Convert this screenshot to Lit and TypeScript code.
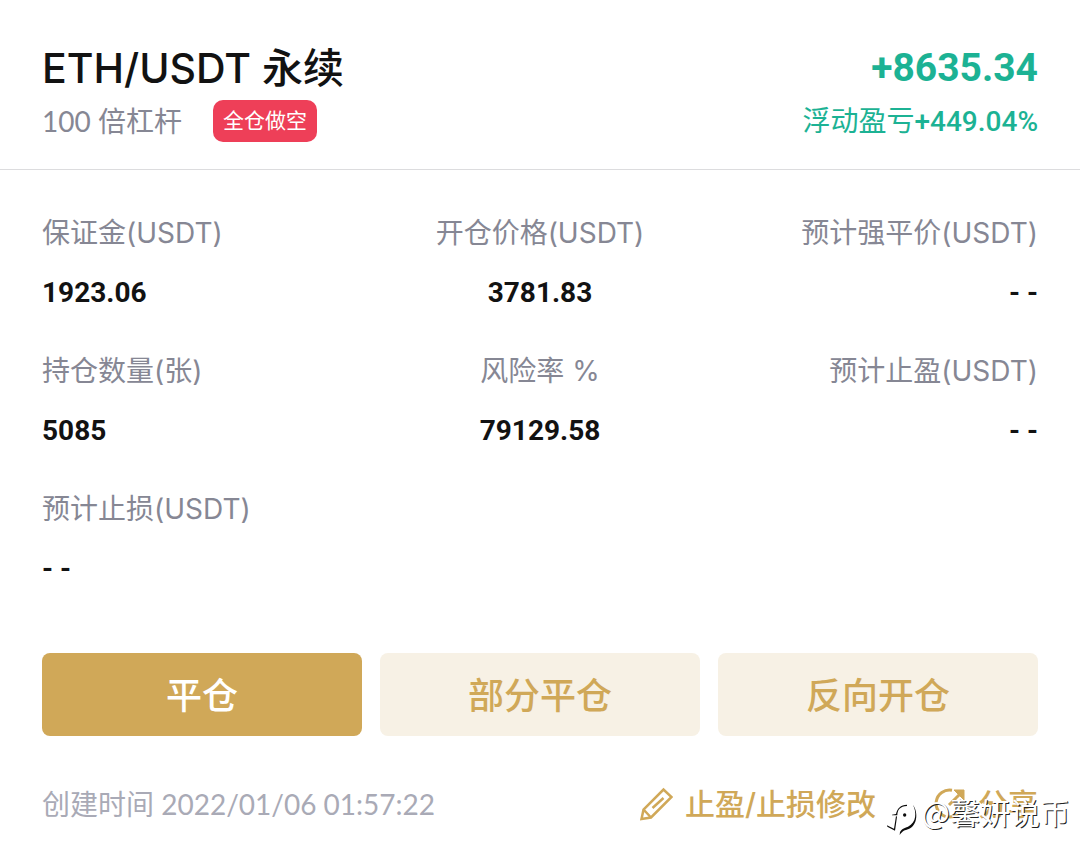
import { LitElement, html, css, svg } from "lit";
import { customElement } from "lit/decorators.js";

interface Field {
  label: string;
  value: string;
}

const FIELDS: Field[] = [
  { label: "保证金(USDT)", value: "1923.06" },
  { label: "开仓价格(USDT)", value: "3781.83" },
  { label: "预计强平价(USDT)", value: "- -" },
  { label: "持仓数量(张)", value: "5085" },
  { label: "风险率 %", value: "79129.58" },
  { label: "预计止盈(USDT)", value: "- -" },
  { label: "预计止损(USDT)", value: "- -" },
];

const pencil = svg`<path d="M2.500 32 L4.500 22.500 L24.500 2.500 L32.500 10 L12 30.500 Z M4.500 22.500 L12 30.500 M13.500 21 L24.500 11" />`;
const share = svg`<path d="M20 3.200 A13.500 13.500 0 1 0 31 18 M17 18 L29 6" stroke-width="3" /><path d="M22 3 H32 V13 Z" fill="currentColor" stroke-width="1" />`;

@customElement("app-root")
export class AppRoot extends LitElement {
  static styles = css`
    :host {
      display: block;
      position: relative;
      min-height: 100vh;
      background: #fff;
      color: #121212;
      font-family: Inter, "Noto Sans CJK SC", sans-serif;
      font-size: 28px;
      line-height: 40px;
    }
    * { box-sizing: border-box; }
    .header {
      display: flex;
      justify-content: space-between;
      padding: 40px 42px 27px;
      border-bottom: 1px solid #dcdcde;
    }
    h1 {
      margin: 0;
      font-size: 41px;
      line-height: 56px;
      font-weight: 500;
    }
    .sub { display: flex; align-items: center; gap: 31px; margin-top: 4px; color: #868794; }
    .plain { font-family: Lato, "Noto Sans CJK SC", sans-serif; }
    .tag {
      padding: 0 10px;
      border-radius: 10px;
      background: #ee3f58;
      color: #fff;
      font-size: 21px;
      line-height: 42px;
    }
    .profit { text-align: right; color: #1cb294; }
    .amount { font: 700 39px/56px Roboto, sans-serif; }
    .rate { margin-top: 6px; font-family: Roboto, "Noto Sans CJK SC", sans-serif; }
    .rate span { font-weight: 500; }
    .fields {
      display: grid;
      grid-template-columns: repeat(3, 1fr);
      row-gap: 38px;
      margin: 0;
      padding: 43px 42px 0;
    }
    .field:nth-child(3n + 2) { text-align: center; }
    .field:nth-child(3n) { text-align: right; }
    dt { color: #868794; white-space: nowrap; }
    dd { margin: 20px 0 0; font-family: Roboto, sans-serif; font-weight: 700; }
    .actions {
      display: grid;
      grid-template-columns: repeat(3, 1fr);
      gap: 18px;
      padding: 64px 42px 0;
    }
    button { border: 0; font-family: inherit; font-weight: 500; color: #d0a858; cursor: pointer; }
    .action {
      height: 83px;
      padding: 0 0 4px;
      border-radius: 8px;
      background: #f7f1e5;
      font-size: 36px;
    }
    .primary { background: #d0a858; color: #fff; }
    .footer {
      display: flex;
      align-items: center;
      justify-content: space-between;
      padding: 48px 42px 40px;
      color: #a9aab6;
    }
    .links { display: flex; gap: 56px; }
    .link {
      display: flex;
      align-items: center;
      gap: 12px;
      padding: 0;
      background: none;
      font-size: 30px;
      line-height: 40px;
    }
    svg { width: 34px; height: 34px; fill: none; stroke: currentColor; stroke-width: 2.5; }
    .watermark {
      position: absolute;
      right: 10px;
      top: 786px;
      display: flex;
      align-items: center;
      color: #fff;
      font-family: "Noto Sans CJK SC", sans-serif;
      font-size: 30px;
      text-shadow: 1px 1px 0 #222;
      pointer-events: none;
    }
    .watermark svg { width: 40px; height: 40px; margin-top: 10px; stroke: none; fill: #0c0c0c; }
  `;

  render() {
    return html`
      <header class="header">
        <div>
          <h1>ETH/USDT 永续</h1>
          <div class="sub"><span class="plain">100 倍杠杆</span><span class="tag">全仓做空</span></div>
        </div>
        <div class="profit">
          <div class="amount">+8635.34</div>
          <div class="rate">浮动盈亏<span>+449.04%</span></div>
        </div>
      </header>
      <dl class="fields">
        ${FIELDS.map((f) => html`<div class="field"><dt>${f.label}</dt><dd>${f.value}</dd></div>`)}
      </dl>
      <div class="actions">
        <button class="action primary">平仓</button>
        <button class="action">部分平仓</button>
        <button class="action">反向开仓</button>
      </div>
      <footer class="footer">
        <span class="plain">创建时间 2022/01/06 01:57:22</span>
        <div class="links">
          <button class="link"><svg viewBox="0 0 34 34" aria-hidden="true">${pencil}</svg>止盈/止损修改</button>
          <button class="link"><svg viewBox="0 0 34 34" aria-hidden="true">${share}</svg>分享</button>
        </div>
      </footer>
      <div class="watermark">
        <svg viewBox="0 0 120 120" aria-hidden="true">
          <path d="M30 58 H46 C46 42 54 31 75 30 V26 C56 26 45 38 42 54 L30 56 Z" />
          <path d="M93 27 C104 48 104 80 78 92 C66 96 60 98 54 108 L53 117 C62 104 68 103 80 99 C108 88 108 46 93 27 Z" />
          <path d="M42 60 L36 98 L15 88 L16 92 L39 104 L45 62 Z" />
          <circle cx="68" cy="57" r="5" />
        </svg>
        <span>@馨妍说币</span>
      </div>
    `;
  }
}
